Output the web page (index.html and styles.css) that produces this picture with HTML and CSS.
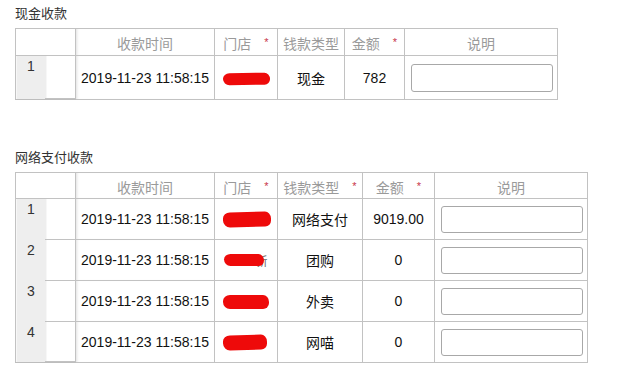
FILE: index.html
```html
<!DOCTYPE html>
<html lang="zh-CN">
<head>
<meta charset="utf-8">
<title>收款</title>
<link rel="stylesheet" href="styles.css">
</head>
<body>
<div class="page">
  <section class="block">
    <h3 class="block-title">现金收款</h3>
    <table class="grid grid-cash">
      <colgroup>
        <col class="c-idx"><col class="c-time"><col class="c-store"><col class="c-type-s"><col class="c-amt-s"><col class="c-note">
      </colgroup>
      <thead>
        <tr>
          <th class="idx"></th>
          <th class="time">收款时间</th>
          <th>门店<span class="req">*</span></th>
          <th>钱款类型</th>
          <th>金额<span class="req">*</span></th>
          <th>说明</th>
        </tr>
      </thead>
      <tbody>
        <tr class="tall">
          <td class="idx"><span class="num">1</span></td>
          <td class="time">2019-11-23 11:58:15</td>
          <td><span class="mask m1"></span></td>
          <td>现金</td>
          <td>782</td>
          <td class="note"><input class="note-input" type="text"></td>
        </tr>
      </tbody>
    </table>
  </section>

  <section class="block block-online">
    <h3 class="block-title">网络支付收款</h3>
    <table class="grid grid-online">
      <colgroup>
        <col class="c-idx"><col class="c-time"><col class="c-store"><col class="c-type"><col class="c-amt"><col class="c-note">
      </colgroup>
      <thead>
        <tr>
          <th class="idx"></th>
          <th class="time">收款时间</th>
          <th>门店<span class="req">*</span></th>
          <th>钱款类型<span class="req">*</span></th>
          <th>金额<span class="req">*</span></th>
          <th>说明</th>
        </tr>
      </thead>
      <tbody>
        <tr>
          <td class="idx"><span class="num">1</span></td>
          <td class="time">2019-11-23 11:58:15</td>
          <td><span class="mask m2"></span></td>
          <td>网络支付</td>
          <td>9019.00</td>
          <td class="note"><input class="note-input" type="text"></td>
        </tr>
        <tr>
          <td class="idx"><span class="num">2</span></td>
          <td class="time">2019-11-23 11:58:15</td>
          <td><span class="masked"><span class="mask m3"></span><span class="tail">新</span></span></td>
          <td>团购</td>
          <td>0</td>
          <td class="note"><input class="note-input" type="text"></td>
        </tr>
        <tr>
          <td class="idx"><span class="num">3</span></td>
          <td class="time">2019-11-23 11:58:15</td>
          <td><span class="mask m4"></span></td>
          <td>外卖</td>
          <td>0</td>
          <td class="note"><input class="note-input" type="text"></td>
        </tr>
        <tr>
          <td class="idx"><span class="num">4</span></td>
          <td class="time">2019-11-23 11:58:15</td>
          <td><span class="mask m5"></span></td>
          <td>网喵</td>
          <td>0</td>
          <td class="note"><input class="note-input" type="text"></td>
        </tr>
      </tbody>
    </table>
  </section>
</div>
</body>
</html>
```

FILE: styles.css
```css
* { box-sizing: border-box; }

html, body {
  margin: 0;
  background: #fff;
}

body {
  font-family: "Liberation Sans", "Noto Sans CJK SC", sans-serif;
  color: #111;
  font-size: 14px;
}

.page {
  padding: 5px 0 0 15px;
}

.block-title {
  margin: 0 0 5px;
  font-size: 13px;
  line-height: 18px;
  font-weight: normal;
  color: #333;
}

.block-online {
  margin-top: 49px;
}

/* data grids */
.grid {
  border-collapse: collapse;
  table-layout: fixed;
  border: 1px solid #bdbdbd;
}

.grid-cash { width: 543px; }
.grid-online { width: 573px; }

.c-idx { width: 60px; }
.c-time { width: 139px; }
.c-store { width: 63px; }
.c-type-s { width: 67px; }
.c-amt-s { width: 60px; }
.c-type { width: 85px; }
.c-amt { width: 72px; }
.c-note { width: 153px; }

.grid th,
.grid td {
  border: 1px solid #c2c2c2;
  padding: 0;
  text-align: center;
  white-space: nowrap;
}

.grid th {
  font-weight: normal;
  color: #9a9a9a;
  font-size: 14px;
  padding-top: 2px;
}

.grid-cash th { height: 27px; }
.grid-online th { height: 26px; }

.grid td { vertical-align: middle; }
.grid-cash td { height: 44px; }
.grid-online td { height: 41px; }

.req {
  display: inline-block;
  margin-left: 13px;
  font-size: 11px;
  color: #c8364a;
  vertical-align: 3px;
}

/* row header column: grey number strip + blank gutter */
.grid td.idx {
  vertical-align: top;
  text-align: left;
  border-bottom: none;
  border-top: none;
  background:
    linear-gradient(#c2c2c2, #c2c2c2) right bottom / 30px 1px no-repeat,
    linear-gradient(to right, #eeeeee 30px, #fff 30px);
}

.grid tbody tr:last-child td.idx {
  border-bottom: 1px solid #bdbdbd;
}

.num {
  display: block;
  width: 30px;
  text-align: center;
  font-size: 14px;
  line-height: 16px;
  color: #333;
  padding-top: 2px;
}

.grid .time {
  box-shadow: inset 3px 0 3px -2px rgba(0, 0, 0, 0.12);
}

/* note input */
.grid td.note {
  padding: 0 5px 0 6px;
}

.note-input {
  display: block;
  width: 142px;
  height: 28px;
  margin: 0;
  border: 1px solid #a8a8a8;
  border-radius: 3px;
  background: #fff;
  font: inherit;
}

.grid-online .note-input { height: 27px; }

/* redacted store names */
.mask {
  display: inline-block;
  vertical-align: middle;
  background: #ee0a0a;
  border-radius: 7px 6px 6px 7px / 6px 7px 6px 7px;
  position: relative;
  z-index: 1;
}

.m1 { width: 47px; height: 12px; transform: rotate(-1deg); }
.m2 { width: 48px; height: 15px; transform: rotate(-1.5deg); margin-left: 2px; }
.m3 { width: 40px; height: 12px; }
.m4 { width: 46px; height: 14px; }
.m5 { width: 44px; height: 15px; transform: rotate(-1.5deg); margin-right: 2px; }

.masked {
  display: inline-flex;
  align-items: center;
  vertical-align: middle;
}

.tail {
  font-size: 12px;
  color: #666;
  margin-left: -9px;
}
```
